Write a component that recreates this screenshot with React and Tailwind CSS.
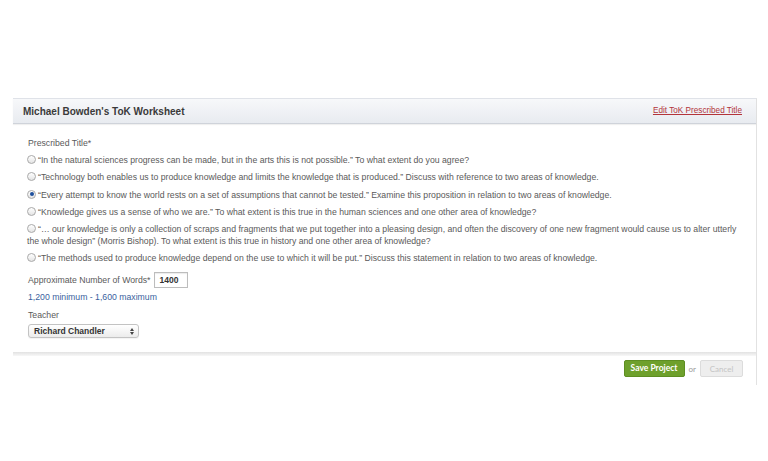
import React from 'react';

const titles = [
  '“In the natural sciences progress can be made, but in the arts this is not possible.” To what extent do you agree?',
  '“Technology both enables us to produce knowledge and limits the knowledge that is produced.” Discuss with reference to two areas of knowledge.',
  '“Every attempt to know the world rests on a set of assumptions that cannot be tested.” Examine this proposition in relation to two areas of knowledge.',
  '“Knowledge gives us a sense of who we are.” To what extent is this true in the human sciences and one other area of knowledge?',
  '“… our knowledge is only a collection of scraps and fragments that we put together into a pleasing design, and often the discovery of one new fragment would cause us to alter utterly the whole design” (Morris Bishop). To what extent is this true in history and one other area of knowledge?',
  '“The methods used to produce knowledge depend on the use to which it will be put.” Discuss this statement in relation to two areas of knowledge.',
];

function Radio({ checked }) {
  return (
    <span className="relative inline-block align-[-1px] w-[9px] h-[9px] rounded-full border border-[#a9a9a9] bg-gradient-to-b from-white to-[#e4e4e4] mr-[2px]">
      {checked && <span className="absolute left-[1.5px] top-[1.5px] w-[4px] h-[4px] rounded-full bg-[#1d4f9c]" />}
    </span>
  );
}

export default function App() {
  const selected = 2;
  return (
    <div className="w-[768px] h-[461px] bg-white pt-[98px] pl-[13px] pr-[11px] font-['Liberation_Sans',Arial,sans-serif]">
      <div className="border-r border-[#e2e2e2] pb-[8px]">
        <div className="h-[26px] flex items-center justify-between pl-[10px] pr-[14px] border-t border-[#dfe2e8] border-b border-b-[#cfd3da] bg-gradient-to-b from-[#f7f8fa] to-[#e8ebf0] shadow-[0_1px_1px_rgba(0,0,0,0.06)]">
          <span className="text-[10px] font-bold text-[#3a3a3a]">Michael Bowden's ToK Worksheet</span>
          <a className="text-[8.2px] text-[#b3343a] underline">Edit ToK Prescribed Title</a>
        </div>

        <div className="pl-[15px] pr-[14px] pt-[13px] pb-[14px] text-[8.7px] leading-[12px] text-[#5a5a5a]">
          <div className="flex flex-col gap-[5.2px]">
            <div>Prescribed Title*</div>
            {titles.map((t, i) => (
              <div key={i} className="-ml-[1px]">
                <Radio checked={i === selected} />
                {t}
              </div>
            ))}
          </div>

          <div className="flex items-center mt-[8px] h-[16px]">
            <span>Approximate Number of Words*</span>
            <span className="ml-[4px] w-[34px] h-[16px] border border-[#bdbdbd] shadow-[inset_0_1px_1px_rgba(0,0,0,0.08)] text-[8.5px] font-bold text-[#333] flex items-center pl-[4px]">1400</span>
          </div>

          <div className="mt-[3px] text-[#3a5f9e]">1,200 minimum - 1,600 maximum</div>

          <div className="mt-[6px]">Teacher</div>

          <div className="mt-[3px] w-[111px] h-[14px] rounded-[3px] border border-[#c3c3c3] bg-gradient-to-b from-white to-[#ececec] flex items-center justify-between pl-[5px] pr-[4px] shadow-[0_1px_1px_rgba(0,0,0,0.05)]">
            <span className="text-[8.5px] font-bold text-[#333]">Richard Chandler</span>
            <span className="flex flex-col gap-[1px]">
              <span className="w-0 h-0 border-l-[2px] border-r-[2px] border-b-[3px] border-l-transparent border-r-transparent border-b-[#444]" />
              <span className="w-0 h-0 border-l-[2px] border-r-[2px] border-t-[3px] border-l-transparent border-r-transparent border-t-[#444]" />
            </span>
          </div>
        </div>

        <div className="h-[4px] bg-gradient-to-b from-[#e2e2e2] to-[#f8f8f8]" />

        <div className="flex items-center justify-end pr-[13px] pt-[4px] font-['Lato',sans-serif]">
          <button className="h-[17px] w-[61px] rounded-[2px] bg-[#6ea02c] border border-[#5e8e22] text-white text-[8.5px] font-bold">Save Project</button>
          <span className="mx-[4px] text-[8px] text-[#999]">or</span>
          <button className="h-[17px] w-[43px] rounded-[2px] bg-[#eeeeee] border border-[#dcdcdc] text-[#c4c4c4] text-[8px]">Cancel</button>
        </div>
      </div>
    </div>
  );
}
